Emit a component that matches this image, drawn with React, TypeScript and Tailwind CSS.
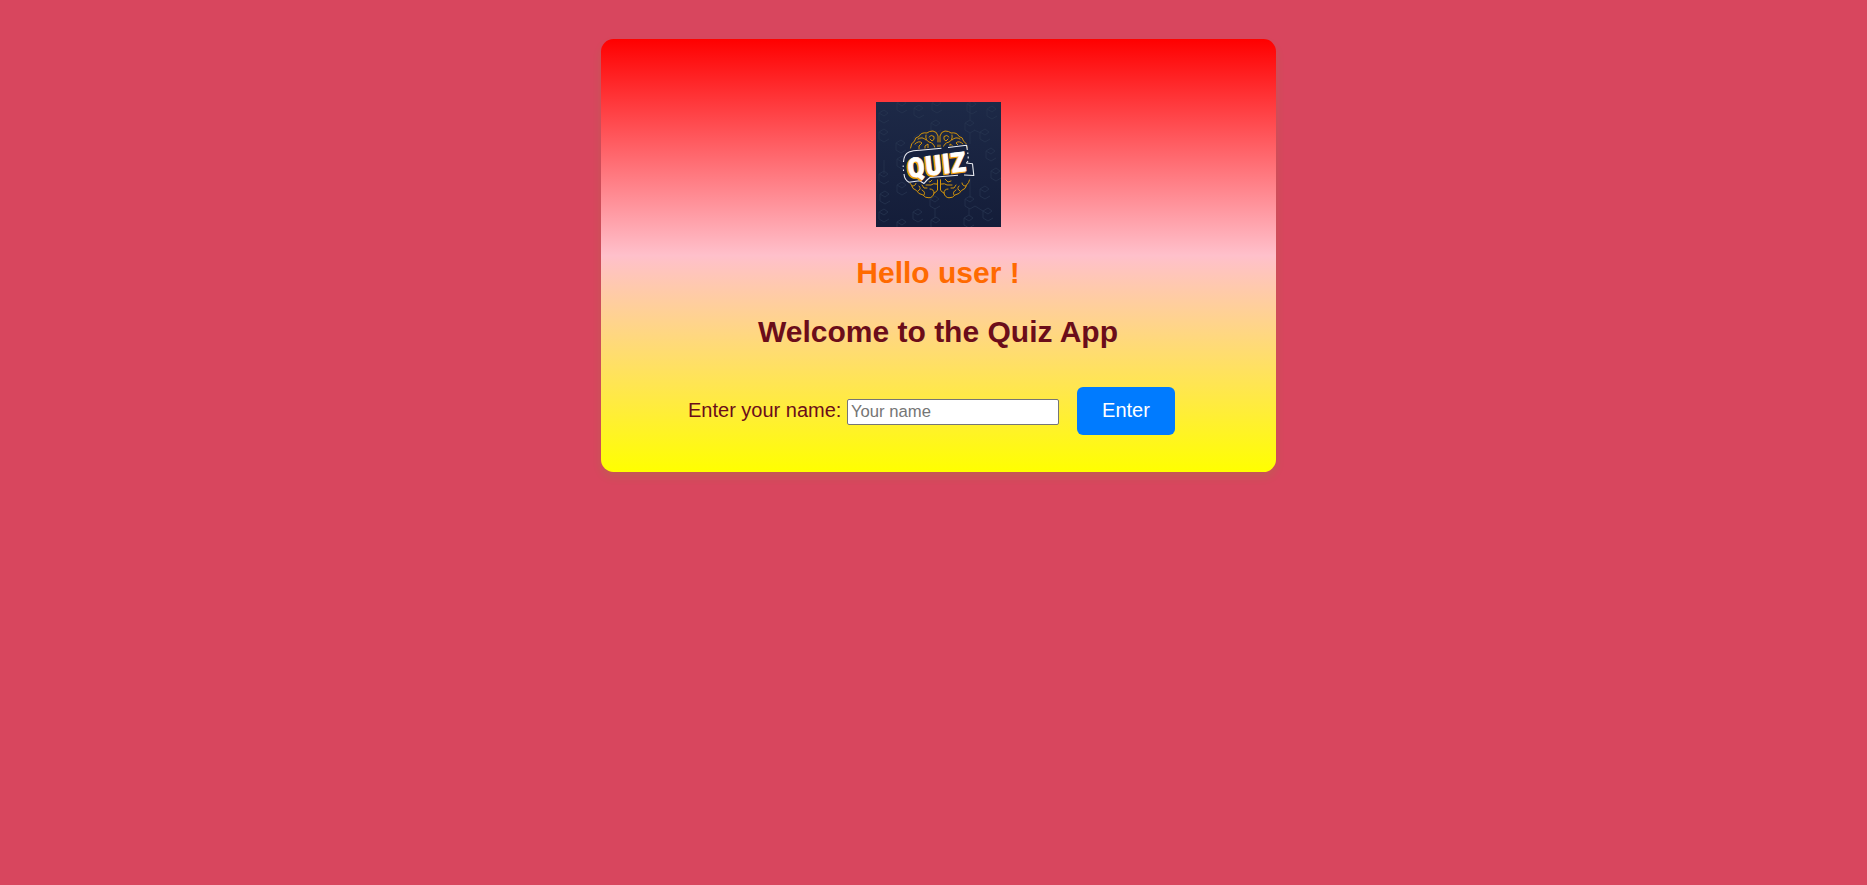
const cubes: number[][] = [
  [8, 14], [26, 4], [43, 9], [60, 24], [61, 4], [94, 24], [96, 5], [109, 33], [116, 10], [8, 33],
  [25, 44], [43, 38], [115, 52], [26, 60], [8, 75], [9, 95], [26, 86], [8, 113], [42, 113],
  [26, 123], [59, 100], [60, 121], [94, 100], [93, 119], [109, 90], [112, 112], [120, 72],
];

const letterFace = "font-['Roboto','Open_Sans',sans-serif] font-black";

function Logo() {
  return (
    <svg viewBox="0 0 125 125" className="block h-[125px] w-[125px]" role="img" aria-label="Quiz">
      <defs>
        <linearGradient id="night" x1="0" y1="0" x2="0" y2="1">
          <stop offset="0" stopColor="#1d2947" />
          <stop offset="1" stopColor="#141d39" />
        </linearGradient>
        <g id="lobe" fill="none" stroke="#d3940b" strokeWidth="1" strokeLinecap="round" strokeLinejoin="round">
          <path d="M62 47V43M62 40V34Q61 29.500 57 29Q53 29 51 31Q45 30 43 34.500Q39 35 38.500 39Q35 41 34.500 46" />
          <path d="M53 35Q55 32 58 34.500Q59 38 56 39L54 37M50 33Q49 38 53 40Q58 41 59 46" />
          <path d="M42 37Q46 34 50 38M39 42Q43 38 46 41L43 44V47M49 47V44L52 42V46" />
        </g>
        <g id="under" fill="none" stroke="#d3940b" strokeWidth="1" strokeLinecap="round" strokeLinejoin="round">
          <path d="M61.500 77V88Q60 90.500 58 91Q57 95.500 53 95.800Q49 96 47 93Q42 92 40.500 88.500Q36 87 35.500 83Q33 81 32.500 78" />
          <path d="M61 82Q57 81 55 83L50 83M58 91Q58 87 54 87M48 93Q50 90 46 88M42 89Q46 87 43 84M36 84Q40 84 40 81" />
          <path d="M51 79L54 80L57 77M46 83L48 86H51" />
        </g>
      </defs>
      <rect width="125" height="125" fill="url(#night)" />
      <g fill="none" stroke="#26344f" strokeWidth="0.8">
        {cubes.map(([x, y]) => (
          <path key={`${x}-${y}`} d={`M${x + 5} ${y + 4}L${x} ${y + 7}L${x - 5} ${y + 4}V${y - 3}L${x} ${y - 6}L${x + 4} ${y - 3}L${x} ${y}L${x - 5} ${y - 3}`} />
        ))}
        <path d="M94 -1V18M94 31V42M98 28L105 31M60 28V37M8 72V58M59 106V116M94 76V96M93 106V113M99 104L107 109" />
      </g>
      <use href="#lobe" />
      <use href="#lobe" transform="matrix(-1 0 0 1 126 0)" />
      <use href="#under" />
      <use href="#under" transform="matrix(-1 0 0 1 126 0)" />
      <path d="M27 61Q28 50 35 48L91 42L93 60L98 62L99 75L55 78L48 83L44 81L33 81Q27 78 27 70Z" fill="#17213e" />
      <g fill="none" stroke="#e9ebf1" strokeWidth="1.1" strokeLinejoin="round">
        <path d="M27.500 60Q28 52 33 50Q37 48.200 44 48.300L65.500 46.200M72 45.500L90.500 43.200L91.300 48" />
        <path d="M91.800 50.500V52M92.200 54.500V56.500M92 59L90.500 61L96.500 61.800L97.800 73.500L88 73M82 73.300L54 75.500Q51 77.500 48 81.500L43.500 78.700L33 80.300Q28.500 78 28 72" />
        <path d="M27.500 69V67.500M27.200 65V63.500" />
      </g>
      <g transform="translate(32 77.300) rotate(-7) skewX(-1) scale(0.88 1)">
        <text x="-0.500" y="-0.500" fontSize="27" textLength="66" fill="#efa00f" stroke="#efa00f" strokeWidth="1.600" className={letterFace}>QUIZ</text>
        <text x="1.300" y="-1.300" fontSize="27" textLength="66" fill="#fff" stroke="#fff" strokeWidth="0.800" className={letterFace}>QUIZ</text>
      </g>
    </svg>
  );
}

export default function App() {
  return (
    <main className="min-h-screen bg-[#d8465e] pt-[39px] pl-[10px] font-['Liberation_Sans',Arial,sans-serif] text-[#6b0d1a]">
      <section className="mx-auto flex h-[433px] w-[675px] flex-col items-center rounded-[12.5px] bg-[linear-gradient(red,pink,yellow)] pt-[63px] shadow-[0_5px_10px_rgba(0,255,0,0.1)]">
        <Logo />
        <h1 className="mt-[29px] mr-px text-[30px] leading-[34px] font-bold text-[#ff6a00]">Hello user !</h1>
        <h2 className="mt-[25px] mr-px text-[30px] leading-[34px] font-bold">Welcome to the Quiz App</h2>
        <form className="mt-[38px] flex h-12 w-full items-start pl-[87px] text-xl leading-[23px]" onSubmit={(e) => e.preventDefault()}>
          <label htmlFor="name" className="mt-3 w-[159px] shrink-0 whitespace-nowrap">Enter your name:</label>
          <input id="name" placeholder="Your name" className="mt-3 h-[26px] w-[212px] rounded-[2px] border border-[#767676] bg-white px-[3px] text-[16.667px] leading-[20px] placeholder:text-[#757575]" />
          <button className="ml-[18px] h-12 w-[98px] rounded-[6px] bg-[#007bff] pb-[2px] text-white">Enter</button>
        </form>
      </section>
    </main>
  );
}
